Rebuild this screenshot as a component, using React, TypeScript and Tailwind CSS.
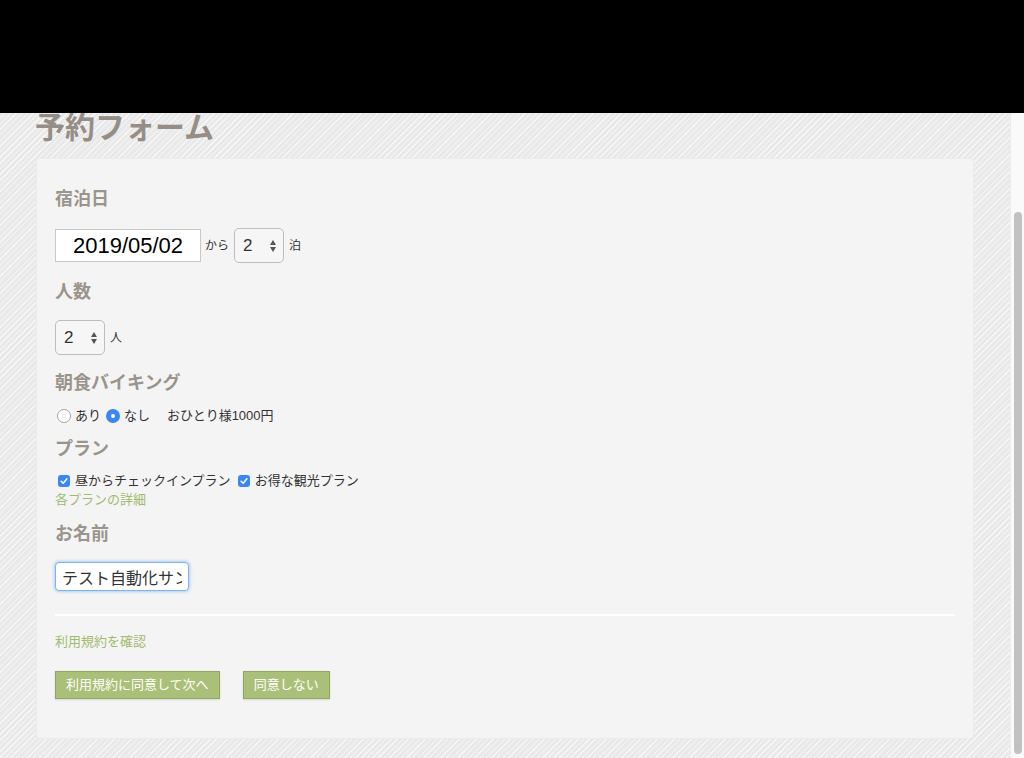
import React from 'react';

const labelCls = 'font-bold text-[18px] leading-[26px] text-[#9b948b]';
const linkCls = 'text-[13px] text-[#a0bb6f]';

const FakeSelect: React.FC<{ value: string }> = ({ value }) => (
  <div className="flex items-center justify-between w-[50px] h-[35px] pl-[8px] pr-[7px] rounded-[5px] border border-[#bdbdbd] bg-[#f6f6f6] text-[17px] text-[#333]">
    <span>{value}</span>
    <span className="flex flex-col items-center gap-[2px]">
      <span className="w-0 h-0 border-l-[3.5px] border-r-[3.5px] border-b-[5px] border-l-transparent border-r-transparent border-b-[#555]" />
      <span className="w-0 h-0 border-l-[3.5px] border-r-[3.5px] border-t-[5px] border-l-transparent border-r-transparent border-t-[#555]" />
    </span>
  </div>
);

const Radio: React.FC<{ checked?: boolean }> = ({ checked }) =>
  checked ? (
    <span className="flex items-center justify-center w-[14px] h-[14px] rounded-full bg-[#3b85f5]">
      <span className="block w-[4px] h-[4px] rounded-full bg-white" />
    </span>
  ) : (
    <span className="block w-[14px] h-[14px] rounded-full bg-white border border-[#a5a5a5]" />
  );

const Check: React.FC = () => (
  <span className="flex items-center justify-center w-[12px] h-[12px] rounded-[3px] bg-[#3b85f5]">
    <svg viewBox="0 0 12 12" className="w-[10px] h-[10px]">
      <path d="M2.5 6.3 L5 8.7 L9.5 3.3" fill="none" stroke="white" strokeWidth="1.8" strokeLinecap="round" strokeLinejoin="round" />
    </svg>
  </span>
);

const App: React.FC = () => {
  return (
    <div
      className="relative h-[758px] overflow-hidden flex"
      style={{ fontFamily: '"Liberation Sans", "Noto Sans CJK JP", sans-serif' }}
    >
      {/* fixed top bar */}
      <div className="absolute top-0 left-0 right-0 h-[113px] bg-black z-10" />

      <main className="flex-1 px-[36px] pt-[108px] bg-[repeating-linear-gradient(135deg,#e9e9e9_0px,#e9e9e9_3px,#f7f7f7_3px,#f7f7f7_4px)]">
        <h1 className="font-bold text-[30px] leading-[40px] text-[#958e86] mb-[10px] -ml-[1px]">予約フォーム</h1>

        <div className="bg-[#f4f4f4] rounded-[4px] border border-[#ebebeb] px-[18px] pt-[27px] pb-[39px]">
          <div className={labelCls}>宿泊日</div>
          <div className="flex items-center mt-[16px]">
            <input
              readOnly
              value="2019/05/02"
              className="w-[146px] h-[33px] bg-white border border-[#c8c8c8] text-center text-[22px] text-black outline-none"
            />
            <span className="ml-[4px] mr-[5px] text-[12px] text-[#333]">から</span>
            <FakeSelect value="2" />
            <span className="ml-[5px] text-[12px] text-[#333]">泊</span>
          </div>

          <div className={`${labelCls} mt-[16px]`}>人数</div>
          <div className="flex items-center mt-[15px]">
            <FakeSelect value="2" />
            <span className="ml-[5px] text-[12px] text-[#333]">人</span>
          </div>

          <div className={`${labelCls} mt-[15px]`}>朝食バイキング</div>
          <div className="flex items-center h-[20px] mt-[10px] text-[13px] text-[#333]">
            <span className="ml-[2px]"><Radio /></span>
            <span className="ml-[4px]">あり</span>
            <span className="ml-[5px]"><Radio checked /></span>
            <span className="ml-[4px]">なし</span>
            <span className="ml-[17px]">おひとり様1000円</span>
          </div>

          <div className={`${labelCls} mt-[10px]`}>プラン</div>
          <div className="flex items-center h-[18px] mt-[10px] text-[13px] text-[#333]">
            <span className="ml-[3px]"><Check /></span>
            <span className="ml-[5px]">昼からチェックインプラン</span>
            <span className="ml-[7px]"><Check /></span>
            <span className="ml-[5px]">お得な観光プラン</span>
          </div>
          <div className={`${linkCls} leading-[18px] mt-[1px]`}>各プランの詳細</div>

          <div className={`${labelCls} mt-[12px]`}>お名前</div>
          <div className="mt-[15px]">
            <input
              readOnly
              value="テスト自動化サンプル"
              className="w-[134px] h-[29px] px-[6px] bg-white border border-[#7cb4f2] rounded-[4px] shadow-[0_0_3px_1px_rgba(100,160,240,0.45)] text-[16px] text-[#333] outline-none"
            />
          </div>

          <div className="mt-[23px] h-[2px] bg-white" />

          <div className={`${linkCls} leading-[20px] mt-[16px]`}>利用規約を確認</div>

          <div className="flex gap-[23px] mt-[19px]">
            <button className="h-[28px] px-[10px] bg-[#aac078] border border-[#8fa762] text-white text-[13px] shadow-[0_1px_2px_rgba(0,0,0,0.12)]">
              利用規約に同意して次へ
            </button>
            <button className="h-[28px] px-[10px] bg-[#aac078] border border-[#8fa762] text-white text-[13px] shadow-[0_1px_2px_rgba(0,0,0,0.12)]">
              同意しない
            </button>
          </div>
        </div>
      </main>

      {/* scrollbar */}
      <div className="w-[14px] bg-[#fafafa] border-l border-[#ececec] pt-[212px] pb-[4px] flex justify-center">
        <div className="w-[8px] h-[542px] rounded-full bg-[#c1c1c1]" />
      </div>
    </div>
  );
};

export default App;
